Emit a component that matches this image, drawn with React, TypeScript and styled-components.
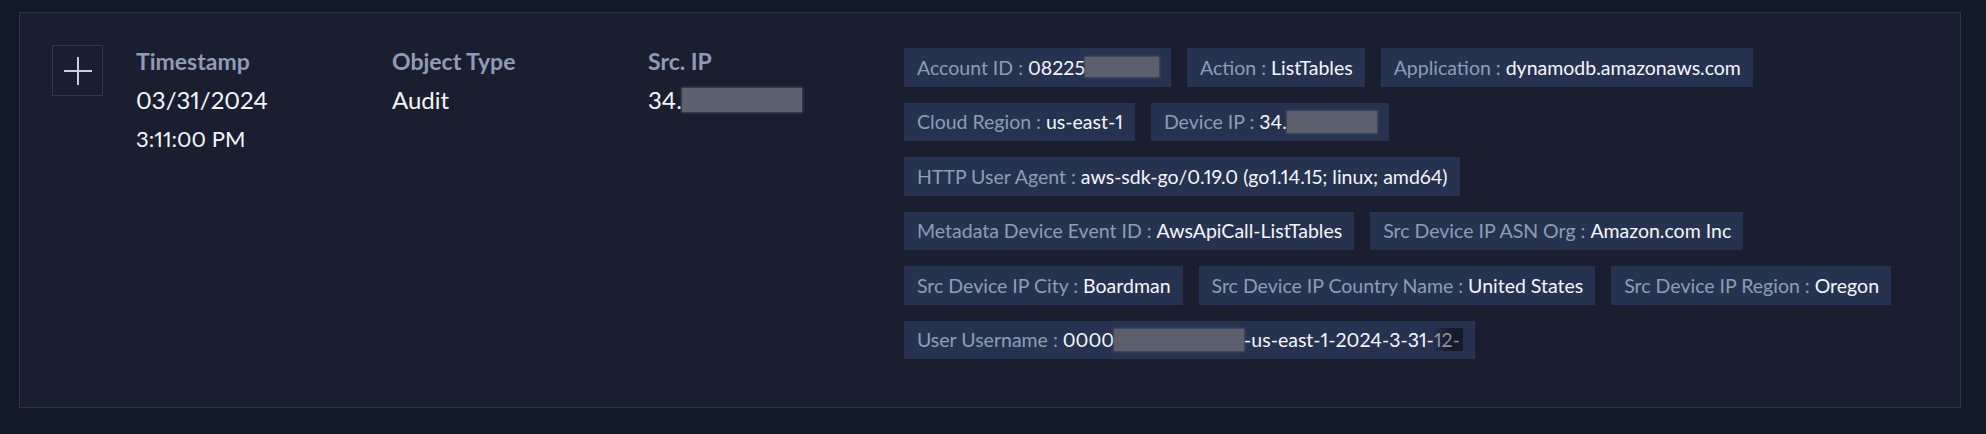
import React from "react";
import styled, { createGlobalStyle } from "styled-components";

const Global = createGlobalStyle`
  html, body { margin: 0; padding: 0; background: #131a27; }
  body {
    font-family: Lato, "Noto Sans", sans-serif;
    font-variant-numeric: proportional-nums;
    -webkit-font-smoothing: antialiased;
  }
  * { box-sizing: border-box; }
`;

const Page = styled.div`
  padding: 12px 25px 26px 19px;
  background: #131a27;
`;

const Card = styled.div`
  display: flex;
  align-items: flex-start;
  height: 396px;
  padding: 32px 30px 0 32px;
  background: #1a1f30;
  border: 1px solid #283450;
`;

const ExpandButton = styled.button`
  flex: none;
  width: 51px;
  height: 51px;
  margin-right: 33px;
  padding: 0;
  display: flex;
  align-items: center;
  justify-content: center;
  background: transparent;
  border: 1px solid #2b3957;
  cursor: pointer;
`;

const Columns = styled.div`
  display: grid;
  grid-template-columns: repeat(3, 256px);
  flex: none;
`;

const Column = styled.div`
  display: flex;
  flex-direction: column;
  padding-top: 2px;
`;

const Heading = styled.div`
  font-size: 23px;
  line-height: 28px;
  font-weight: 700;
  color: #8e9cb5;
  margin-bottom: 7px;
`;

const Value = styled.div<{ $small?: boolean }>`
  font-size: ${(p) => (p.$small ? "22px" : "24px")};
  line-height: 36px;
  color: #f3f5f8;
  margin-top: ${(p) => (p.$small ? "3px" : "0")};
  display: flex;
  align-items: center;
`;

const Redacted = styled.span<{ $w: number; $h: number }>`
  display: inline-block;
  width: ${(p) => p.$w}px;
  height: ${(p) => p.$h}px;
  background: #5b606c;
  box-shadow: 0 0 2px 1px rgba(91, 96, 108, 0.6);
  vertical-align: middle;
`;

const Tags = styled.div`
  display: flex;
  flex-direction: column;
  gap: 16px;
  margin-top: 3px;
`;

const TagRow = styled.div`
  display: flex;
  gap: 16px;
`;

const Tag = styled.div`
  height: 38.5px;
  display: flex;
  align-items: center;
  padding: 0 12px 0 13px;
  background: #263350;
  font-size: 19.5px;
  white-space: pre;
  color: #f4f6f9;
`;

const TagLabel = styled.span`
  color: #8f9cb4;
`;

const Faded = styled.span`
  display: inline-block;
  height: 23px;
  line-height: 23px;
  padding-right: 3px;
  color: #8a93a4;
  background: linear-gradient(to right, rgba(20, 26, 39, 0.1), #141a28 55%);
`;

type TagDef = { label: string; value: React.ReactNode };

const rows: TagDef[][] = [
  [
    { label: "Account ID", value: <>08225<Redacted $w={74} $h={20} /></> },
    { label: "Action", value: "ListTables" },
    { label: "Application", value: "dynamodb.amazonaws.com" },
  ],
  [
    { label: "Cloud Region", value: "us-east-1" },
    { label: "Device IP", value: <>34.<Redacted $w={90} $h={22} /></> },
  ],
  [{ label: "HTTP User Agent", value: "aws-sdk-go/0.19.0 (go1.14.15; linux; amd64)" }],
  [
    { label: "Metadata Device Event ID", value: "AwsApiCall-ListTables" },
    { label: "Src Device IP ASN Org", value: "Amazon.com Inc" },
  ],
  [
    { label: "Src Device IP City", value: "Boardman" },
    { label: "Src Device IP Country Name", value: "United States" },
    { label: "Src Device IP Region", value: "Oregon" },
  ],
  [
    {
      label: "User Username",
      value: (
        <>
          0000
          <Redacted $w={130} $h={22} />
          -us-east-1-2024-3-31-<Faded>12-</Faded>
        </>
      ),
    },
  ],
];

const PlusIcon = () => (
  <svg width="30" height="30" viewBox="0 0 30 30" fill="none">
    <path d="M15 1V29M1 15H29" stroke="#c6d0ea" strokeWidth="2" />
  </svg>
);

export default function App() {
  return (
    <>
      <Global />
      <Page>
        <Card>
          <ExpandButton aria-label="Expand">
            <PlusIcon />
          </ExpandButton>
          <Columns>
            <Column>
              <Heading>Timestamp</Heading>
              <Value>03/31/2024</Value>
              <Value $small>3:11:00 PM</Value>
            </Column>
            <Column>
              <Heading>Object Type</Heading>
              <Value>Audit</Value>
            </Column>
            <Column>
              <Heading>Src. IP</Heading>
              <Value>
                34.<Redacted $w={120} $h={24} />
              </Value>
            </Column>
          </Columns>
          <Tags>
            {rows.map((row, i) => (
              <TagRow key={i}>
                {row.map((t) => (
                  <Tag key={t.label}>
                    <TagLabel>{t.label} : </TagLabel>
                    {t.value}
                  </Tag>
                ))}
              </TagRow>
            ))}
          </Tags>
        </Card>
      </Page>
    </>
  );
}
